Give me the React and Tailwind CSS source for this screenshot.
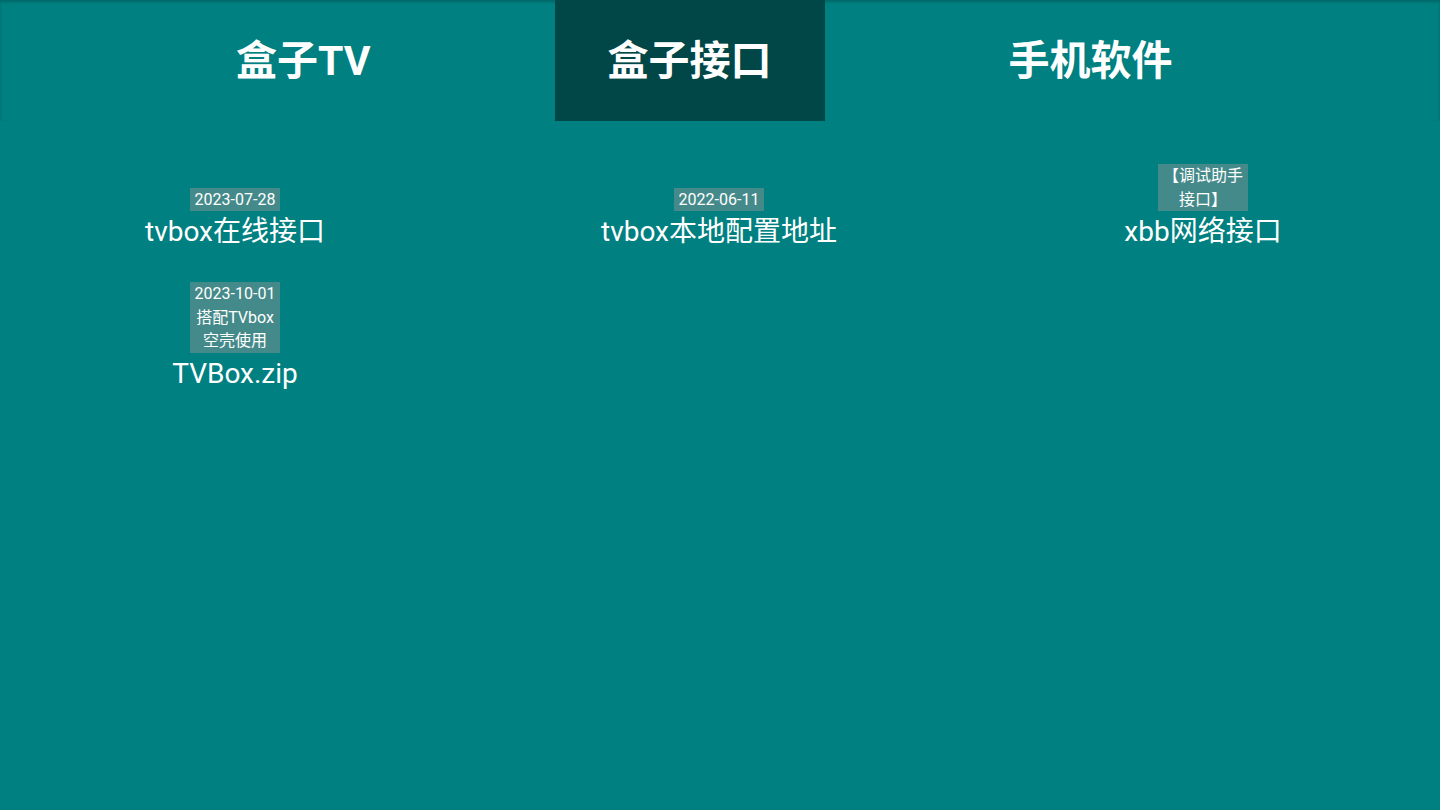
const tabs = [
  { label: "盒子TV", active: false },
  { label: "盒子接口", active: true },
  { label: "手机软件", active: false },
];

const items = [
  { tag: "2023-07-28", title: "tvbox在线接口" },
  { tag: "2022-06-11", title: "tvbox本地配置地址" },
  { tag: "【调试助手接口】", title: "xbb网络接口" },
  { tag: "2023-10-01 搭配TVbox空壳使用", title: "TVBox.zip" },
];

export default function App() {
  return (
    <div
      className="min-h-screen w-full overflow-hidden bg-[#008080] text-white"
      style={{ fontFamily: "Roboto, 'Noto Sans CJK SC', sans-serif" }}
    >
      {/* Tabs */}
      <div className="flex h-[121px] pl-[183px] gap-[131px] shadow-[inset_0_2px_3px_rgba(0,0,0,0.2)]">
        {tabs.map((t) => (
          <div
            key={t.label}
            className={`flex items-center justify-center px-[53px] pt-[3px] text-[41px] font-bold ${
              t.active ? "bg-[#014747]" : ""
            }`}
          >
            {t.label}
          </div>
        ))}
      </div>

      {/* Items */}
      <div className="ml-[-7px] grid grid-cols-[repeat(3,484px)] items-end gap-y-[34px] pt-[43px]">
        {items.map((it) => (
          <div key={it.title} className="flex flex-col items-center">
            <div className="w-[90px] bg-[#458a8a] text-center text-[16px] leading-[23.5px] mb-[5px]">
              {it.tag}
            </div>
            <div className="text-[28px] leading-[32px]">{it.title}</div>
          </div>
        ))}
      </div>
    </div>
  );
}
